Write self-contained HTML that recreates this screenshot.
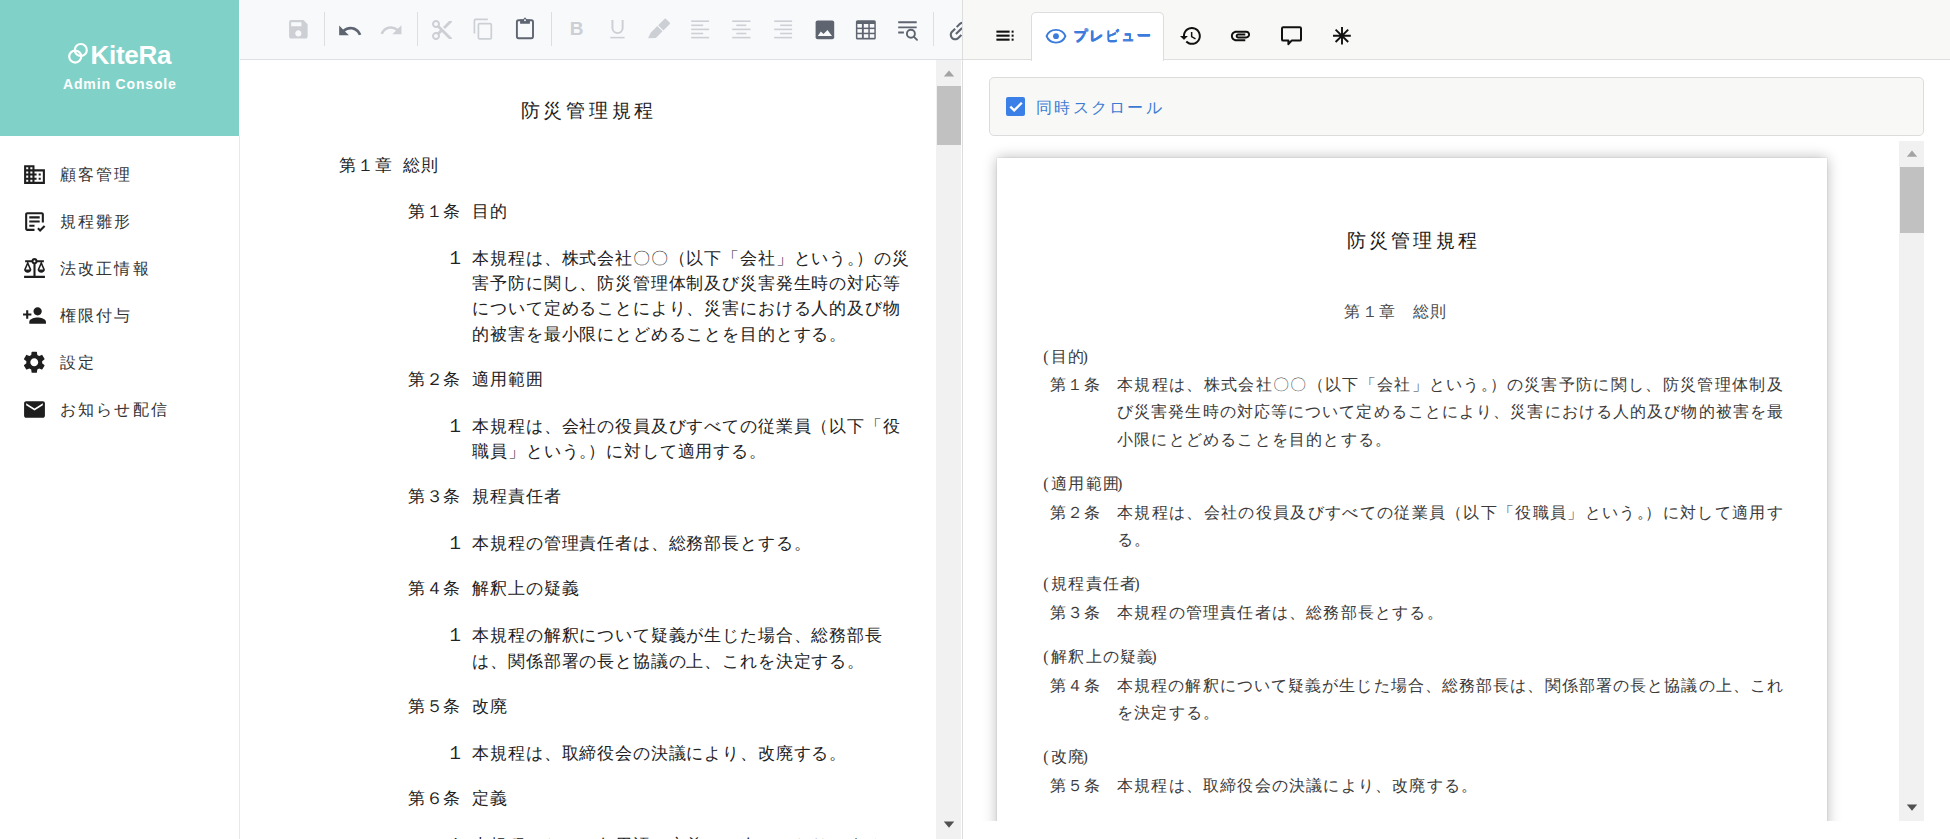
<!DOCTYPE html>
<html lang="ja"><head><meta charset="utf-8"><title>KiteRa</title>
<style>
html,body{margin:0;padding:0;width:1950px;height:839px;overflow:hidden;background:#fff;font-family:"Liberation Sans",sans-serif;}
.a{position:absolute;}
.t{position:absolute;white-space:nowrap;}
svg{position:absolute;display:block;}
</style></head><body>

<div class="a" style="left:0;top:0;width:239px;height:136px;background:#80d1c8"></div>
<div class="a" style="left:239px;top:136px;width:1px;height:703px;background:#e8e8ec"></div>
<svg style="left:66px;top:41px" width="24" height="24" viewBox="0 0 24 24"><circle cx="9.2" cy="15.6" r="6" fill="none" stroke="#fff" stroke-width="2.2"/><circle cx="14.8" cy="9" r="6" fill="none" stroke="#fff" stroke-width="2.2"/></svg>
<div class="t" style="left:90.5px;top:38.5px;font-size:26px;line-height:32px;font-weight:bold;color:#fff;letter-spacing:-0.3px">KiteRa</div>
<div class="t" style="left:63px;top:75.4px;font-size:14px;line-height:18px;font-weight:bold;color:#fff;letter-spacing:0.85px">Admin Console</div>
<svg style="left:21.50px;top:161.90px" width="25" height="25" viewBox="0 0 24 24" fill="#1e1e1e"><path d="M12 7V3H2v18h20V7H12zM6 19H4v-2h2v2zm0-4H4v-2h2v2zm0-4H4V9h2v2zm0-4H4V5h2v2zm4 12H8v-2h2v2zm0-4H8v-2h2v2zm0-4H8V9h2v2zm0-4H8V5h2v2zm10 12h-8v-2h2v-2h-2v-2h2v-2h-2V9h8v10zm-2-8h-2v2h2v-2zm0 4h-2v2h2v-2z"/></svg>
<div class="t" style="left:60.00px;top:167.34px;font-size:16px;line-height:16px;letter-spacing:2.150px;color:#333;font-family:'Liberation Sans', sans-serif;">顧客管理</div>
<svg style="left:21.50px;top:208.90px" width="25" height="25" viewBox="0 0 24 24" fill="#1e1e1e"><path d="M19 3H5c-1.1 0-2 .9-2 2v14c0 1.1.9 2 2 2h7v-2H5V5h14v8h2V5c0-1.1-.9-2-2-2zM7 7h10v2H7zm0 4h10v2H7zm0 4h5v2H7zm7.6 4.2l1.4-1.4 1.4 1.4 3.6-3.6 1.4 1.4-5 5z"/></svg>
<div class="t" style="left:60.00px;top:214.34px;font-size:16px;line-height:16px;letter-spacing:2.150px;color:#333;font-family:'Liberation Sans', sans-serif;">規程雛形</div>
<svg style="left:21.50px;top:255.90px" width="25" height="25" viewBox="0 0 24 24" fill="#1e1e1e"><path d="M13 7.83c.85-.3 1.53-.98 1.83-1.83H18l-3 7c0 1.66 1.57 3 3.5 3s3.5-1.34 3.5-3l-3-7h2V4h-6.17c-.41-1.17-1.52-2-2.83-2s-2.42.83-2.83 2H3v2h2l-3 7c0 1.66 1.57 3 3.5 3S9 14.66 9 13L6 6h3.17c.3.85.98 1.53 1.83 1.83V19H2v2h20v-2h-9V7.83zM20.37 13h-3.74l1.87-4.36L20.37 13zm-13 0H3.63L5.5 8.64 7.37 13zM12 6c-.55 0-1-.45-1-1s.45-1 1-1 1 .45 1 1-.45 1-1 1z"/></svg>
<div class="t" style="left:60.00px;top:261.34px;font-size:16px;line-height:16px;letter-spacing:2.150px;color:#333;font-family:'Liberation Sans', sans-serif;">法改正情報</div>
<svg style="left:21.50px;top:302.90px" width="25" height="25" viewBox="0 0 24 24" fill="#1e1e1e"><path d="M15 12c2.21 0 4-1.79 4-4s-1.79-4-4-4-4 1.79-4 4 1.79 4 4 4zm-9-2V7H4v3H1v2h3v3h2v-3h3v-2H6zm9 4c-2.67 0-8 1.34-8 4v2h16v-2c0-2.66-5.33-4-8-4z"/></svg>
<div class="t" style="left:60.00px;top:308.34px;font-size:16px;line-height:16px;letter-spacing:2.150px;color:#333;font-family:'Liberation Sans', sans-serif;">権限付与</div>
<svg style="left:20.75px;top:349.15px" width="26.5" height="26.5" viewBox="0 0 24 24" fill="#1e1e1e"><path d="M19.14 12.94c.04-.3.06-.61.06-.94 0-.32-.02-.64-.07-.94l2.03-1.58c.18-.14.23-.41.12-.61l-1.92-3.32c-.12-.22-.37-.29-.59-.22l-2.39.96c-.5-.38-1.03-.7-1.62-.94l-.36-2.54c-.04-.24-.24-.41-.48-.41h-3.84c-.24 0-.43.17-.47.41l-.36 2.54c-.59.24-1.13.57-1.62.94l-2.39-.96c-.22-.08-.47 0-.59.22L2.74 8.87c-.12.21-.08.47.12.61l2.03 1.58c-.05.3-.09.63-.09.94s.02.64.07.94l-2.03 1.58c-.18.14-.23.41-.12.61l1.92 3.32c.12.22.37.29.59.22l2.39-.96c.5.38 1.03.7 1.62.94l.36 2.54c.05.24.24.41.48.41h3.84c.24 0 .44-.17.47-.41l.36-2.54c.59-.24 1.13-.56 1.62-.94l2.39.96c.22.08.47 0 .59-.22l1.92-3.32c.12-.22.07-.47-.12-.61l-2.01-1.58zM12 15.6c-1.98 0-3.6-1.62-3.6-3.6s1.62-3.6 3.6-3.6 3.6 1.62 3.6 3.6-1.62 3.6-3.6 3.6z"/></svg>
<div class="t" style="left:60.00px;top:355.34px;font-size:16px;line-height:16px;letter-spacing:2.150px;color:#333;font-family:'Liberation Sans', sans-serif;">設定</div>
<svg style="left:21.50px;top:396.90px" width="25" height="25" viewBox="0 0 24 24" fill="#1e1e1e"><path d="M20 4H4c-1.1 0-1.99.9-1.99 2L2 18c0 1.1.9 2 2 2h16c1.1 0 2-.9 2-2V6c0-1.1-.9-2-2-2zm0 4l-8 5-8-5V6l8 5 8-5v2z"/></svg>
<div class="t" style="left:60.00px;top:402.34px;font-size:16px;line-height:16px;letter-spacing:2.150px;color:#333;font-family:'Liberation Sans', sans-serif;">お知らせ配信</div>
<div class="a" style="left:240px;top:0;width:722px;height:59px;background:#f8f9fb;border-bottom:1px solid #dcdfe4"></div>
<div class="a" style="left:962px;top:0;width:1px;height:839px;background:#dddddd"></div>
<div class="a" style="left:323.5px;top:12px;width:1px;height:34px;background:#dcdee2"></div>
<div class="a" style="left:416.5px;top:12px;width:1px;height:34px;background:#dcdee2"></div>
<div class="a" style="left:550.5px;top:12px;width:1px;height:34px;background:#dcdee2"></div>
<div class="a" style="left:932.5px;top:12px;width:1px;height:34px;background:#dcdee2"></div>
<svg style="left:286.2px;top:17.3px" width="24.7" height="24.7" viewBox="0 0 24 24" fill="#cccfd4"><path d="M17 3H5c-1.11 0-2 .9-2 2v14c0 1.1.89 2 2 2h14c1.1 0 2-.9 2-2V7l-4-4zm-5 16c-1.66 0-3-1.34-3-3s1.34-3 3-3 3 1.34 3 3-1.34 3-3 3zm3-10H5V5h10v4z"/></svg>
<svg style="left:337.0px;top:17.6px" width="26" height="26" viewBox="0 0 24 24" fill="#5e6571"><path d="M12.5 8c-2.65 0-5.05.99-6.9 2.6L2 7v9h9l-3.62-3.62c1.39-1.16 3.16-1.88 5.12-1.88 3.54 0 6.55 2.31 7.6 5.5l2.37-.78C21.08 11.03 17.15 8 12.5 8z"/></svg>
<svg style="left:379.3px;top:18.0px" width="24.5" height="24.5" viewBox="0 0 24 24" fill="#cccfd4"><path d="M18.4 10.6C16.55 8.99 14.15 8 11.5 8c-4.65 0-8.58 3.03-9.960 7.22L3.9 16c1.05-3.19 4.05-5.5 7.6-5.5 1.95 0 3.73.72 5.12 1.88L13 16h9V7l-3.6 3.6z"/></svg>
<svg style="left:430.3px;top:17.6px" width="24" height="24" viewBox="0 0 24 24" fill="#cccfd4"><path d="M9.64 7.64c.23-.5.36-1.05.36-1.640 0-2.21-1.79-4-4-4S2 3.79 2 6s1.79 4 4 4c.59 0 1.14-.13 1.64-.36L10 12l-2.36 2.36C7.14 14.13 6.59 14 6 14c-2.21 0-4 1.79-4 4s1.790 4 4 4 4-1.79 4-4c0-.59-.13-1.14-.36-1.64L12 14l7 7h3v-1L9.640 7.64zM6 8c-1.1 0-2-.89-2-2s.9-2 2-2 2 .89 2 2-.9 2-2 2zm0 12c-1.1 0-2-.89-2-2s.9-2 2-2 2 .89 2 2-.9 2-2 2zM19 3l-6 6 2 2 7-7V3z"/></svg>
<svg style="left:471px;top:16px" width="24" height="26" viewBox="0 0 24 26"><g fill="none" stroke="#cccfd4" stroke-width="1.7"><rect x="7.4" y="7.6" width="12.9" height="15.3" rx="1.2"/><path d="M3.4 17.5V4.4Q3.4 3.3 4.5 3.3H16.8"/></g></svg>
<svg style="left:512px;top:16px" width="24" height="26" viewBox="0 0 24 26"><rect x="4.9" y="4.3" width="16.1" height="17.9" rx="1.6" fill="none" stroke="#5e6571" stroke-width="1.9"/><path d="M8.1 7.7V3.6H11L13 1.2 15 3.6H17.9V7.7Z" fill="#5e6571"/><circle cx="13" cy="4.3" r="0.95" fill="#f8f9fb"/></svg>
<div class="t" style="left:569.7px;top:16.6px;font-size:19px;line-height:24px;font-weight:bold;color:#cccfd4">B</div>
<svg style="left:605px;top:14px" width="24" height="26" viewBox="0 0 24 26"><path d="M7.45 6.1V14.05A5.1 5.1 0 0 0 17.65 14.05V6.1" fill="none" stroke="#cccfd4" stroke-width="1.95"/><rect x="5.3" y="22.8" width="14.3" height="1.6" fill="#cccfd4"/></svg>
<svg style="left:644px;top:14px" width="30" height="28" viewBox="0 0 30 28"><path d="M14.2 11.2 L20.6 4.8 Q21.2 4.2 21.8 4.8 L25.8 8.8 Q26.4 9.4 25.8 10 L19.4 16.4 Z" fill="#cccfd4"/><path d="M13.3 12.1 L18.5 17.3 L11.9 23.9 L4 24.3 L6.7 18.7 Z" fill="#cccfd4"/></svg>
<svg style="left:685px;top:14px" width="115" height="30" viewBox="0 0 115 30" fill="#cccfd4"><rect x="6.20" y="6.40" width="17.90" height="1.6"/><rect x="47.20" y="6.40" width="18.30" height="1.6"/><rect x="89.20" y="6.40" width="17.90" height="1.6"/><rect x="6.20" y="10.50" width="12.00" height="1.6"/><rect x="51.30" y="10.50" width="10.00" height="1.6"/><rect x="95.20" y="10.50" width="11.90" height="1.6"/><rect x="6.20" y="14.60" width="17.90" height="1.6"/><rect x="47.20" y="14.60" width="18.30" height="1.6"/><rect x="89.20" y="14.60" width="17.90" height="1.6"/><rect x="6.20" y="18.70" width="12.00" height="1.6"/><rect x="51.30" y="18.70" width="10.00" height="1.6"/><rect x="95.20" y="18.70" width="11.90" height="1.6"/><rect x="6.20" y="22.80" width="17.90" height="1.6"/><rect x="47.20" y="22.80" width="18.30" height="1.6"/><rect x="89.20" y="22.80" width="17.90" height="1.6"/></svg>
<svg style="left:813px;top:17.5px" width="24" height="24" viewBox="0 0 24 24"><rect x="2.6" y="2.6" width="18.6" height="18.6" rx="2" fill="#5e6571"/><path d="M4.8 18.1 L7.8 13.4 L10.5 16 L14.5 12 L19 18.1 Z" fill="#f8f9fb"/></svg>
<svg style="left:853px;top:17px" width="24" height="24" viewBox="0 0 24 24"><rect x="2.9" y="3.2" width="19.9" height="19.4" rx="1.6" fill="#5e6571"/><rect x="4.4" y="7" width="4.5" height="3.6" fill="#f8f9fb"/><rect x="10.8" y="7" width="4.5" height="3.6" fill="#f8f9fb"/><rect x="16.8" y="7" width="4.5" height="3.6" fill="#f8f9fb"/><rect x="4.4" y="12.1" width="4.5" height="3.6" fill="#f8f9fb"/><rect x="10.8" y="12.1" width="4.5" height="3.6" fill="#f8f9fb"/><rect x="16.8" y="12.1" width="4.5" height="3.6" fill="#f8f9fb"/><rect x="4.4" y="17.2" width="4.5" height="3.6" fill="#f8f9fb"/><rect x="10.8" y="17.2" width="4.5" height="3.6" fill="#f8f9fb"/><rect x="16.8" y="17.2" width="4.5" height="3.6" fill="#f8f9fb"/></svg>
<svg style="left:896px;top:18px" width="24" height="24" viewBox="0 0 24 24"><g stroke="#5e6571" stroke-width="1.9" fill="none"><path d="M2.2 4.3H20.7M2.2 9.4H20.7M2.2 14.5H7.9"/><circle cx="14.9" cy="15.7" r="4"/><path d="M17.8 18.6L21 21.8" stroke-linecap="round"/></g></svg>
<div class="a" style="left:940px;top:10px;width:22px;height:40px;overflow:hidden"><svg style="left:6px;top:8px" width="26" height="26" viewBox="0 0 24 24"><g transform="rotate(-45 12 12)" fill="#5e6571"><path d="M3.9 12c0-1.71 1.39-3.1 3.1-3.1h4V7H7c-2.76 0-5 2.24-5 5s2.24 5 5 5h4v-1.9H7c-1.71 0-3.1-1.39-3.1-3.1zM8 13h8v-2H8v2zm9-6h-4v1.9h4c1.71 0 3.1 1.39 3.1 3.1s-1.39 3.1-3.1 3.1h-4V17h4c2.76 0 5-2.24 5-5s-2.24-5-5-5z"/></g></svg></div>
<div class="a" style="left:936px;top:60px;width:25px;height:779px;background:#f1f1f1"></div>
<div class="a" style="left:937px;top:86px;width:23.5px;height:58.5px;background:#c1c1c1"></div>
<svg style="left:941px;top:68px" width="16" height="10" viewBox="0 0 16 10"><path d="M2.8 8.6 L8 2.4 L13.2 8.6Z" fill="#a3a3a3"/></svg>
<svg style="left:941px;top:820px" width="16" height="10" viewBox="0 0 16 10"><path d="M2.8 1.6 L8 7.8 L13.2 1.6Z" fill="#505050"/></svg>
<div class="t" style="left:520.80px;top:101.20px;font-size:19px;line-height:19px;letter-spacing:3.700px;color:#222;font-family:'Liberation Sans', sans-serif;">防災管理規程</div>
<div class="t" style="left:339.10px;top:156.85px;font-size:17px;line-height:17px;letter-spacing:0.850px;color:#222;font-family:'Liberation Sans', sans-serif;">第１章</div>
<div class="t" style="left:403.00px;top:156.85px;font-size:17px;line-height:17px;letter-spacing:0.850px;color:#222;font-family:'Liberation Sans', sans-serif;">総則</div>
<div class="t" style="left:407.80px;top:202.85px;font-size:17px;line-height:17px;letter-spacing:0.850px;color:#222;font-family:'Liberation Sans', sans-serif;">第１条</div>
<div class="t" style="left:472.30px;top:202.85px;font-size:17px;line-height:17px;letter-spacing:0.850px;color:#222;font-family:'Liberation Sans', sans-serif;">目的</div>
<div class="t" style="left:446.20px;top:247.75px;font-size:19px;line-height:19px;letter-spacing:0.000px;color:#222;font-family:'Liberation Sans', sans-serif;">１</div>
<div class="t" style="left:472.30px;top:249.65px;font-size:17px;line-height:17px;letter-spacing:0.850px;color:#222;font-family:'Liberation Sans', sans-serif;">本規程は、株式会社〇〇（以下「会社」という<span style="letter-spacing:-8.075px">。</span>）の災</div>
<div class="t" style="left:472.30px;top:275.05px;font-size:17px;line-height:17px;letter-spacing:0.850px;color:#222;font-family:'Liberation Sans', sans-serif;">害予防に関し、防災管理体制及び災害発生時の対応等</div>
<div class="t" style="left:472.30px;top:300.45px;font-size:17px;line-height:17px;letter-spacing:0.850px;color:#222;font-family:'Liberation Sans', sans-serif;">について定めることにより、災害における人的及び物</div>
<div class="t" style="left:472.30px;top:325.85px;font-size:17px;line-height:17px;letter-spacing:0.850px;color:#222;font-family:'Liberation Sans', sans-serif;">的被害を最小限にとどめることを目的とする。</div>
<div class="t" style="left:407.80px;top:371.05px;font-size:17px;line-height:17px;letter-spacing:0.850px;color:#222;font-family:'Liberation Sans', sans-serif;">第２条</div>
<div class="t" style="left:472.30px;top:371.05px;font-size:17px;line-height:17px;letter-spacing:0.850px;color:#222;font-family:'Liberation Sans', sans-serif;">適用範囲</div>
<div class="t" style="left:446.20px;top:415.95px;font-size:19px;line-height:19px;letter-spacing:0.000px;color:#222;font-family:'Liberation Sans', sans-serif;">１</div>
<div class="t" style="left:472.30px;top:417.85px;font-size:17px;line-height:17px;letter-spacing:0.850px;color:#222;font-family:'Liberation Sans', sans-serif;">本規程は、会社の役員及びすべての従業員（以下「役</div>
<div class="t" style="left:472.30px;top:443.25px;font-size:17px;line-height:17px;letter-spacing:0.850px;color:#222;font-family:'Liberation Sans', sans-serif;">職員」という<span style="letter-spacing:-8.075px">。</span>）に対して適用する。</div>
<div class="t" style="left:407.80px;top:488.45px;font-size:17px;line-height:17px;letter-spacing:0.850px;color:#222;font-family:'Liberation Sans', sans-serif;">第３条</div>
<div class="t" style="left:472.30px;top:488.45px;font-size:17px;line-height:17px;letter-spacing:0.850px;color:#222;font-family:'Liberation Sans', sans-serif;">規程責任者</div>
<div class="t" style="left:446.20px;top:533.35px;font-size:19px;line-height:19px;letter-spacing:0.000px;color:#222;font-family:'Liberation Sans', sans-serif;">１</div>
<div class="t" style="left:472.30px;top:535.25px;font-size:17px;line-height:17px;letter-spacing:0.850px;color:#222;font-family:'Liberation Sans', sans-serif;">本規程の管理責任者は、総務部長とする。</div>
<div class="t" style="left:407.80px;top:580.45px;font-size:17px;line-height:17px;letter-spacing:0.850px;color:#222;font-family:'Liberation Sans', sans-serif;">第４条</div>
<div class="t" style="left:472.30px;top:580.45px;font-size:17px;line-height:17px;letter-spacing:0.850px;color:#222;font-family:'Liberation Sans', sans-serif;">解釈上の疑義</div>
<div class="t" style="left:446.20px;top:625.35px;font-size:19px;line-height:19px;letter-spacing:0.000px;color:#222;font-family:'Liberation Sans', sans-serif;">１</div>
<div class="t" style="left:472.30px;top:627.25px;font-size:17px;line-height:17px;letter-spacing:0.850px;color:#222;font-family:'Liberation Sans', sans-serif;">本規程の解釈について疑義が生じた場合、総務部長</div>
<div class="t" style="left:472.30px;top:652.65px;font-size:17px;line-height:17px;letter-spacing:0.850px;color:#222;font-family:'Liberation Sans', sans-serif;">は、関係部署の長と協議の上、これを決定する。</div>
<div class="t" style="left:407.80px;top:697.85px;font-size:17px;line-height:17px;letter-spacing:0.850px;color:#222;font-family:'Liberation Sans', sans-serif;">第５条</div>
<div class="t" style="left:472.30px;top:697.85px;font-size:17px;line-height:17px;letter-spacing:0.850px;color:#222;font-family:'Liberation Sans', sans-serif;">改廃</div>
<div class="t" style="left:446.20px;top:742.75px;font-size:19px;line-height:19px;letter-spacing:0.000px;color:#222;font-family:'Liberation Sans', sans-serif;">１</div>
<div class="t" style="left:472.30px;top:744.65px;font-size:17px;line-height:17px;letter-spacing:0.850px;color:#222;font-family:'Liberation Sans', sans-serif;">本規程は、取締役会の決議により、改廃する。</div>
<div class="t" style="left:407.80px;top:789.85px;font-size:17px;line-height:17px;letter-spacing:0.850px;color:#222;font-family:'Liberation Sans', sans-serif;">第６条</div>
<div class="t" style="left:472.30px;top:789.85px;font-size:17px;line-height:17px;letter-spacing:0.850px;color:#222;font-family:'Liberation Sans', sans-serif;">定義</div>
<div class="t" style="left:446.20px;top:834.75px;font-size:19px;line-height:19px;letter-spacing:0.000px;color:#222;font-family:'Liberation Sans', sans-serif;">１</div>
<div class="t" style="left:472.30px;top:836.65px;font-size:17px;line-height:17px;letter-spacing:0.850px;color:#222;font-family:'Liberation Sans', sans-serif;">本規程において各用語の定義は、次のとおりとする。</div>
<div class="a" style="left:963px;top:0;width:987px;height:59px;background:#f8f8f7;border-bottom:1px solid #dedede"></div>
<div class="a" style="left:1031px;top:12px;width:131px;height:48px;background:#fff;border:1px solid #dddddd;border-bottom:none;border-radius:5px 5px 0 0"></div>
<svg style="left:1044px;top:23.5px" width="24" height="24" viewBox="0 0 24 24"><path d="M12 5.9C7.4 5.9 3.9 8.7 2.6 12.2 3.9 15.7 7.4 18.6 12 18.6s8.1-2.9 9.4-6.4C20.1 8.7 16.6 5.9 12 5.9z" fill="none" stroke="#3a7bdc" stroke-width="1.9"/><circle cx="12" cy="12.2" r="2.9" fill="#3a7bdc"/></svg>
<div class="t" style="left:1073.30px;top:28.40px;font-size:14px;line-height:14px;letter-spacing:1.850px;color:#3a7bdc;font-family:'Liberation Sans', sans-serif;text-shadow:0.5px 0 0 #3a7bdc,-0.3px 0 0 #3a7bdc,0 0.5px 0 #3a7bdc,0.5px 0.5px 0 #3a7bdc;">プレビュー</div>
<svg style="left:994px;top:24px" width="22" height="22" viewBox="0 0 22 22"><g fill="#111"><rect x="2.4" y="6.6" width="13.2" height="2.1"/><rect x="2.4" y="10.6" width="13.2" height="2.1"/><rect x="2.4" y="14.6" width="13.2" height="2.1"/><rect x="17.6" y="6.6" width="2" height="2.1"/><rect x="17.6" y="10.6" width="2" height="2.1"/><rect x="17.6" y="14.6" width="2" height="2.1"/></g></svg>
<svg style="left:1179.0px;top:24.0px" width="23.8" height="23.8" viewBox="0 0 24 24" fill="#111"><path d="M13 3c-4.97 0-9 4.03-9 9H1l3.89 3.89.07.14L9 12H6c0-3.87 3.13-7 7-7s7 3.13 7 7-3.13 7-7 7c-1.93 0-3.68-.79-4.94-2.06l-1.42 1.42C8.27 19.99 10.51 21 13 21c4.97 0 9-4.03 9-9s-4.03-9-9-9zm-1 5v5l4.28 2.54.72-1.21-3.5-2.08V8H12z"/></svg>
<svg style="left:1228.5px;top:24.0px" width="23" height="23" viewBox="0 0 24 24" fill="#111"><path d="M2 12.5C2 9.46 4.46 7 7.5 7H18c2.21 0 4 1.79 4 4s-1.79 4-4 4H9.5C8.12 15 7 13.88 7 12.5S8.12 10 9.5 10H17v2H9.41c-.55 0-.55 1 0 1H18c1.1 0 2-.9 2-2s-.9-2-2-2H7.5C5.57 9 4 10.57 4 12.5S5.57 16 7.5 16H17v2H7.5C4.46 18 2 15.54 2 12.5z"/></svg>
<svg style="left:1279px;top:24px" width="24" height="24" viewBox="0 0 24 24"><path d="M4.2 3.2H20.8Q22 3.2 22 4.4V15.4Q22 16.6 20.8 16.6H12.6L9.4 20.2 9.4 16.6H4.2Q3 16.6 3 15.4V4.4Q3 3.2 4.2 3.2Z" fill="none" stroke="#111" stroke-width="2" stroke-linejoin="round"/></svg>
<svg style="left:1330px;top:24px" width="24" height="24" viewBox="0 0 24 24"><g stroke="#111" stroke-width="1.9"><path d="M12 3V20.5M3 11.8H20.8M5.6 5.6L18.2 18M18.2 5.6L5.6 18"/></g></svg>
<div class="a" style="left:989px;top:77px;width:933px;height:57px;background:#f8f8f7;border:1px solid #dcdcdc;border-radius:5px"></div>
<div class="a" style="left:1005.5px;top:97px;width:19.5px;height:19px;background:#3b80e6;border-radius:2px"></div>
<svg style="left:1005.5px;top:97px" width="20" height="19" viewBox="0 0 20 19"><path d="M4.3 9.6 L8.2 13.4 L15.8 5.8" fill="none" stroke="#fff" stroke-width="2.3"/></svg>
<div class="t" style="left:1036.00px;top:99.60px;font-size:16px;line-height:16px;letter-spacing:2.250px;color:#3d7bd3;font-family:'Liberation Sans', sans-serif;">同時スクロール</div>
<div class="a" style="left:963px;top:141px;width:961px;height:680px;overflow:hidden">
<div class="a" style="left:34px;top:16.5px;width:829.5px;height:900px;background:#fff;box-shadow:0 0 13px rgba(0,0,0,0.28),0 0 1.5px rgba(0,0,0,0.14)"></div>
</div>
<div class="a" style="left:1899px;top:141px;width:25px;height:680px;background:#f1f1f1"></div>
<div class="a" style="left:1900px;top:166.5px;width:24px;height:66.5px;background:#c1c1c1"></div>
<svg style="left:1904px;top:148px" width="16" height="10" viewBox="0 0 16 10"><path d="M2.8 8.8 L8 2.6 L13.2 8.8Z" fill="#a3a3a3"/></svg>
<svg style="left:1904px;top:803px" width="16" height="10" viewBox="0 0 16 10"><path d="M2.8 1.6 L8 7.8 L13.2 1.6Z" fill="#505050"/></svg>
<div class="a" style="left:0;top:0;width:1899px;height:821px;overflow:hidden">
<div class="t" style="left:1347.20px;top:230.50px;font-size:19px;line-height:19px;letter-spacing:3.100px;color:#1a1a1a;font-family:'Liberation Serif', serif;">防災管理規程</div>
<div class="t" style="left:1344.40px;top:304.30px;font-size:16px;line-height:16px;letter-spacing:1.200px;color:#4a4a4a;font-family:'Liberation Serif', serif;">第１章　総則</div>
<div class="t" style="left:1043.20px;top:349.04px;font-size:16px;line-height:16px;letter-spacing:1.200px;color:#3a3a3a;font-family:'Liberation Serif', serif;"><span style="letter-spacing:2.6px">(</span>目的<span style="margin-left:-3px">)</span></div>
<div class="t" style="left:1050.00px;top:377.20px;font-size:16px;line-height:16px;letter-spacing:1.200px;color:#3a3a3a;font-family:'Liberation Serif', serif;">第１条</div>
<div class="t" style="left:1117.00px;top:377.20px;font-size:16px;line-height:16px;letter-spacing:1.325px;color:#3a3a3a;font-family:'Liberation Serif', serif;">本規程は、株式会社〇〇（以下「会社」という<span style="letter-spacing:-7.338px">。</span>）の災害予防に関し、防災管理体制及</div>
<div class="t" style="left:1117.00px;top:404.40px;font-size:16px;line-height:16px;letter-spacing:1.103px;color:#3a3a3a;font-family:'Liberation Serif', serif;">び災害発生時の対応等について定めることにより、災害における人的及び物的被害を最</div>
<div class="t" style="left:1117.00px;top:431.60px;font-size:16px;line-height:16px;letter-spacing:1.200px;color:#3a3a3a;font-family:'Liberation Serif', serif;">小限にとどめることを目的とする。</div>
<div class="t" style="left:1043.20px;top:476.34px;font-size:16px;line-height:16px;letter-spacing:1.200px;color:#3a3a3a;font-family:'Liberation Serif', serif;"><span style="letter-spacing:2.6px">(</span>適用範囲<span style="margin-left:-3px">)</span></div>
<div class="t" style="left:1050.00px;top:504.50px;font-size:16px;line-height:16px;letter-spacing:1.200px;color:#3a3a3a;font-family:'Liberation Serif', serif;">第２条</div>
<div class="t" style="left:1117.00px;top:504.50px;font-size:16px;line-height:16px;letter-spacing:1.325px;color:#3a3a3a;font-family:'Liberation Serif', serif;">本規程は、会社の役員及びすべての従業員（以下「役職員」という<span style="letter-spacing:-7.338px">。</span>）に対して適用す</div>
<div class="t" style="left:1117.00px;top:531.70px;font-size:16px;line-height:16px;letter-spacing:1.200px;color:#3a3a3a;font-family:'Liberation Serif', serif;">る。</div>
<div class="t" style="left:1043.20px;top:576.44px;font-size:16px;line-height:16px;letter-spacing:1.200px;color:#3a3a3a;font-family:'Liberation Serif', serif;"><span style="letter-spacing:2.6px">(</span>規程責任者<span style="margin-left:-3px">)</span></div>
<div class="t" style="left:1050.00px;top:604.60px;font-size:16px;line-height:16px;letter-spacing:1.200px;color:#3a3a3a;font-family:'Liberation Serif', serif;">第３条</div>
<div class="t" style="left:1117.00px;top:604.60px;font-size:16px;line-height:16px;letter-spacing:1.200px;color:#3a3a3a;font-family:'Liberation Serif', serif;">本規程の管理責任者は、総務部長とする。</div>
<div class="t" style="left:1043.20px;top:649.34px;font-size:16px;line-height:16px;letter-spacing:1.200px;color:#3a3a3a;font-family:'Liberation Serif', serif;"><span style="letter-spacing:2.6px">(</span>解釈上の疑義<span style="margin-left:-3px">)</span></div>
<div class="t" style="left:1050.00px;top:677.50px;font-size:16px;line-height:16px;letter-spacing:1.200px;color:#3a3a3a;font-family:'Liberation Serif', serif;">第４条</div>
<div class="t" style="left:1117.00px;top:677.50px;font-size:16px;line-height:16px;letter-spacing:1.103px;color:#3a3a3a;font-family:'Liberation Serif', serif;">本規程の解釈について疑義が生じた場合、総務部長は、関係部署の長と協議の上、これ</div>
<div class="t" style="left:1117.00px;top:704.70px;font-size:16px;line-height:16px;letter-spacing:1.200px;color:#3a3a3a;font-family:'Liberation Serif', serif;">を決定する。</div>
<div class="t" style="left:1043.20px;top:749.44px;font-size:16px;line-height:16px;letter-spacing:1.200px;color:#3a3a3a;font-family:'Liberation Serif', serif;"><span style="letter-spacing:2.6px">(</span>改廃<span style="margin-left:-3px">)</span></div>
<div class="t" style="left:1050.00px;top:777.60px;font-size:16px;line-height:16px;letter-spacing:1.200px;color:#3a3a3a;font-family:'Liberation Serif', serif;">第５条</div>
<div class="t" style="left:1117.00px;top:777.60px;font-size:16px;line-height:16px;letter-spacing:1.200px;color:#3a3a3a;font-family:'Liberation Serif', serif;">本規程は、取締役会の決議により、改廃する。</div>
<div class="t" style="left:1043.20px;top:822.34px;font-size:16px;line-height:16px;letter-spacing:1.200px;color:#3a3a3a;font-family:'Liberation Serif', serif;"><span style="letter-spacing:2.6px">(</span>定義<span style="margin-left:-3px">)</span></div>
<div class="t" style="left:1050.00px;top:850.50px;font-size:16px;line-height:16px;letter-spacing:1.200px;color:#3a3a3a;font-family:'Liberation Serif', serif;">第６条</div>
<div class="t" style="left:1117.00px;top:850.50px;font-size:16px;line-height:16px;letter-spacing:1.200px;color:#3a3a3a;font-family:'Liberation Serif', serif;">本規程において各用語の定義は、次のとおりとする。</div>
</div>
</body></html>
